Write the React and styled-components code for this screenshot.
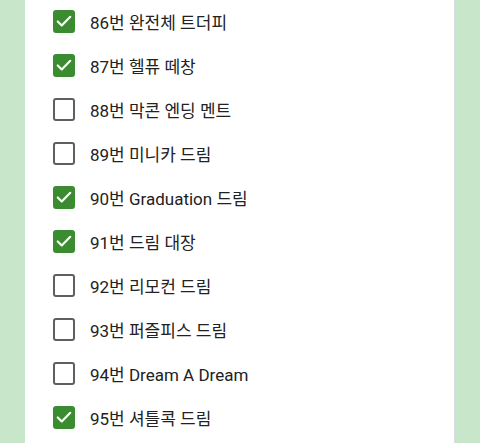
import React, { useState } from 'react';
import styled, { createGlobalStyle } from 'styled-components';

const GlobalStyle = createGlobalStyle`
    html, body {
        margin: 0;
        padding: 0;
        background-color: #c8e6c9;
        font-family: Roboto, "Noto Sans CJK KR", sans-serif;
    }
`;

const items = [
    { label: '86번 완전체 트더피', checked: true },
    { label: '87번 헬퓨 떼창', checked: true },
    { label: '88번 막콘 엔딩 멘트', checked: false },
    { label: '89번 미니카 드림', checked: false },
    { label: '90번 Graduation 드림', checked: true },
    { label: '91번 드림 대장', checked: true },
    { label: '92번 리모컨 드림', checked: false },
    { label: '93번 퍼즐피스 드림', checked: false },
    { label: '94번 Dream A Dream', checked: false },
    { label: '95번 셔틀콕 드림', checked: true },
];

const CheckIcon = () => (
    <svg width="20" height="20" viewBox="0 0 24 24" fill="none">
        <path d="M4.5 12.5l4.8 4.8L19.5 7" stroke="#fff" strokeWidth="2.6" strokeLinecap="round" strokeLinejoin="round" />
    </svg>
);

const App = () => {
    const [list, setList] = useState(items);

    const toggle = (i) => {
        setList(list.map((item, idx) => (idx === i ? { ...item, checked: !item.checked } : item)));
    };

    return (
        <>
            <GlobalStyle />
            <Panel>
                {list.map((item, i) => (
                    <Row key={item.label} onClick={() => toggle(i)}>
                        <Box checked={item.checked}>{item.checked && <CheckIcon />}</Box>
                        <Label>{item.label}</Label>
                    </Row>
                ))}
            </Panel>
        </>
    );
};

const Panel = styled.div`
    margin: -1px 25px 0;
    min-height: 460px;
    background-color: #fff;
    border-right: 1px solid #d6dde3;
    padding-left: 28px;
`;

const Row = styled.div`
    display: flex;
    align-items: center;
    gap: 15px;
    height: 44px;
    cursor: pointer;
`;

const Box = styled.span`
    box-sizing: border-box;
    width: 22px;
    height: 23px;
    border-radius: 3px;
    display: flex;
    align-items: center;
    justify-content: center;
    background-color: ${(p) => (p.checked ? '#3b8b30' : '#fff')};
    border: ${(p) => (p.checked ? 'none' : '2px solid #5f5f5f')};
`;

const Label = styled.span`
    font-size: 17px;
    color: #222;
`;

export default App;
